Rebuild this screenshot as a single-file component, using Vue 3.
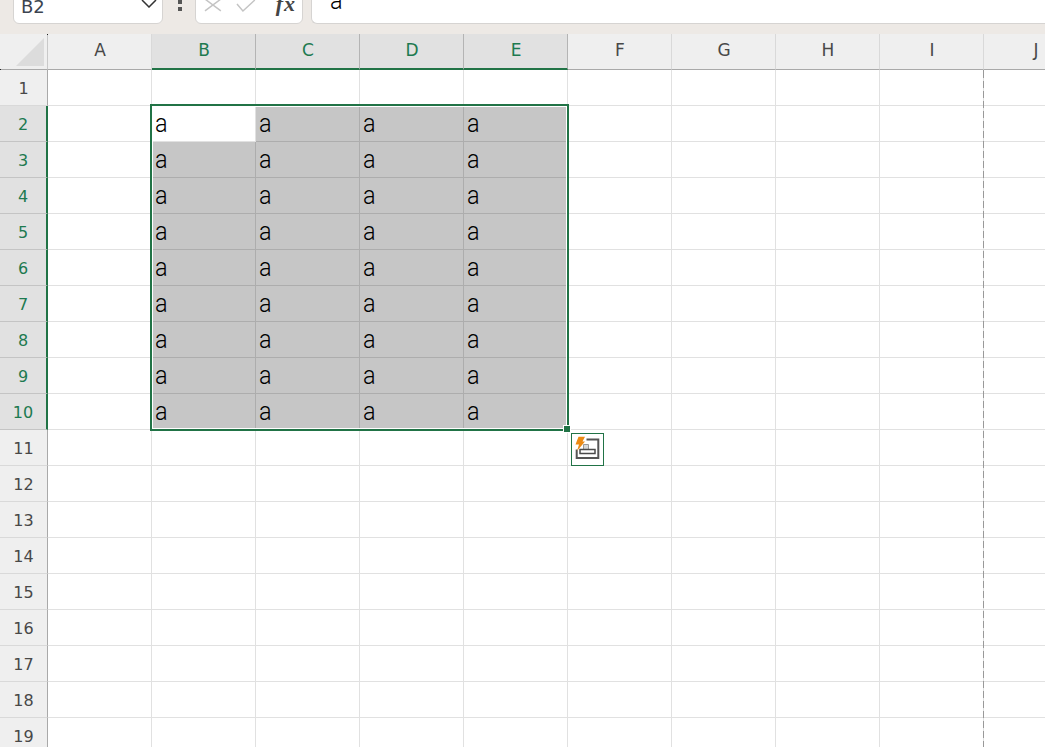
<script setup>
const cols = ['A','B','C','D','E','F','G','H','I','J']
const rows = Array.from({ length: 19 }, (_, i) => i + 1)
const selCol = c => c >= 1 && c <= 4
const selRow = r => r >= 2 && r <= 10
const cellClass = (r, c) => ({
  sel: selRow(r) && selCol(c) && !(r === 2 && c === 1)
})
</script>

<template>
  <div class="app">
    <div class="toolbar">
      <div class="namebox">
        <span class="name">B2</span>
        <svg class="chev" width="16" height="9" viewBox="0 0 16 9"><path d="M1 1 L8 8 L15 1" fill="none" stroke="#333" stroke-width="1.5"/></svg>
      </div>
      <div class="dots"><i></i><i></i></div>
      <div class="fxbox">
        <svg width="18" height="13" viewBox="0 0 18 13"><path d="M1 0 L17 12 M17 0 L1 12" stroke="#c4c4c4" stroke-width="1.5" fill="none"/></svg>
        <svg width="20" height="12" viewBox="0 0 20 12"><path d="M1 4 L7 11 L19 0" stroke="#c4c4c4" stroke-width="1.5" fill="none"/></svg>
        <span class="fx">fx</span>
      </div>
      <div class="formula"><span class="glyph-a">a</span></div>
    </div>

    <div class="sheet">
      <div class="corner"><i></i></div>
      <div v-for="(c, i) in cols" :key="c" class="colhead" :class="{ on: selCol(i) }">{{ c }}</div>
      <template v-for="r in rows" :key="r">
        <div class="rowhead" :class="{ on: selRow(r) }">{{ r }}</div>
        <div v-for="(c, i) in cols" :key="c" class="cell" :class="cellClass(r, i)">
          <span v-if="selRow(r) && selCol(i)" class="glyph-a">a</span>
        </div>
      </template>

      <div class="pagebreak"></div>
      <i class="speck speck-top"></i>
      <i class="speck speck-left"></i>
      <div class="selection"><i class="handle"></i></div>
      <div class="smarttag">
        <svg width="31" height="31" viewBox="0 0 31 31">
          <path d="M14.5 5.5 H26.3 V24 H4.7 V15.5" fill="none" stroke="#555" stroke-width="2"/>
          <path d="M11.5 15.5 V10.5 H16.5 V15.5" fill="#d8d8d8" stroke="#999" stroke-width="1"/>
          <rect x="8" y="15.5" width="15" height="4" fill="#fff" stroke="#4a4a4a" stroke-width="1.5"/>
          <path d="M6.5 2.7 H13 L10.5 7.5 H13 L5 17 L7 10.5 H3.5 Z" fill="#ec8a14"/>
        </svg>
      </div>
    </div>
  </div>
</template>

<style>
html, body { margin: 0; overflow: hidden; background: #fff; }
</style>

<style scoped>
.app {
  width: 1045px;
  height: 747px;
  overflow: hidden;
  font-family: "DejaVu Sans", sans-serif;
}
.toolbar {
  height: 34px;
  background: #ede9e5;
  display: flex;
  align-items: flex-end;
  padding: 0 0 10px 13px;
  box-sizing: border-box;
  overflow: hidden;
}
.namebox, .fxbox, .formula {
  height: 30px;
  flex: none;
  background: #fff;
  border: 1px solid #d6d4d2;
  border-radius: 6px;
  box-sizing: border-box;
  display: flex;
  align-items: flex-end;
}
.namebox {
  width: 150px;
  justify-content: space-between;
  padding: 0 5px 14px 7px;
}
.name { font-size: 18px; line-height: 18px; color: #3c4450; position: relative; top: 7px; }
.chev { margin-bottom: 1px; }
.dots { width: 32px; flex: none; display: flex; flex-direction: column; align-items: center; gap: 3px; padding-bottom: 13px; padding-left: 1px; box-sizing: border-box; }
.dots i { width: 4px; height: 4px; background: #555; display: block; }
.fxbox {
  width: 108px;
  padding: 0 6px 11px 9px;
  gap: 15px;
  align-items: flex-end;
}
.fxbox svg:first-child { margin-left: -1px; }
.fxbox svg:nth-child(2) { margin-left: -1px; }
.fx {
  font-family: "Liberation Serif", serif;
  font-style: italic;
  font-weight: 700;
  font-size: 22px;
  letter-spacing: 1px;
  line-height: 18px;
  color: #444;
  margin-left: 5px;
  position: relative;
  top: 1px;
}
.formula {
  width: 740px;
  margin-left: 8px;
  padding: 0 0 16px 18px;
  line-height: 14px;
  border-right: none;
  border-radius: 6px 0 0 6px;
}
.glyph-a {
  display: inline-block;
  font-family: Roboto, sans-serif;
  font-weight: 300;
  font-size: 26px;
  line-height: 28px;
  transform: scaleX(.9);
  transform-origin: left center;
  color: #000;
}
.formula .glyph-a {
  line-height: 14px;
}
.sheet {
  position: relative;
  display: grid;
  grid-template-columns: 48px repeat(10, 104px);
  grid-template-rows: 36px repeat(19, 36px);
  background: #fff;
}
.corner {
  background: #efefef;
  border-right: 1px solid #c8c8c8;
  border-bottom: 1px solid #a9a9a9;
  box-sizing: border-box;
  position: relative;
}
.corner i {
  position: absolute;
  left: 16px;
  top: 4px;
  width: 28px;
  height: 28px;
  background: #dcdcdc;
  clip-path: polygon(100% 0, 100% 100%, 0 100%);
}
.colhead {
  background: #efefef;
  border-right: 1px solid #d9d9d9;
  border-bottom: 1px solid #a9a9a9;
  box-sizing: border-box;
  display: flex;
  align-items: center;
  justify-content: center;
  font-size: 17px;
  color: #484848;
  padding: 0 0 3px 1px;
}
.colhead.on {
  background: #e1e1e1;
  color: #1d7a50;
  border-right-color: #b4b4b4;
  border-bottom: 2px solid #217346;
}
.rowhead {
  background: #efefef;
  border-right: 1px solid #a9a9a9;
  border-bottom: 1px solid #d9d9d9;
  box-sizing: border-box;
  display: flex;
  align-items: center;
  justify-content: center;
  padding-top: 2px;
  font-size: 16px;
  color: #484848;
}
.rowhead.on {
  background: #e1e1e1;
  color: #1d7a50;
  border-right: 2px solid #217346;
  border-bottom-color: #c4c4c4;
}
.cell {
  border-right: 1px solid #e1e1e1;
  border-bottom: 1px solid #e1e1e1;
  box-sizing: border-box;
  display: flex;
  align-items: center;
  padding: 0 0 2px 3px;
}
.cell.sel {
  background: #c6c6c6;
  border-right-color: #adadad;
  border-bottom-color: #adadad;
}
.pagebreak {
  position: absolute;
  left: 983px;
  top: 36px;
  bottom: 0;
  width: 1px;
  background: repeating-linear-gradient(#999 0 7px, transparent 7px 10px);
  background-position: 0 1px;
}
.speck {
  position: absolute;
  width: 1px;
  height: 1px;
  background: #222;
}
.speck-top { left: 47px; top: 0; }
.speck-left { left: 0; top: 35px; }
.selection {
  position: absolute;
  left: 150px;
  top: 70px;
  width: 419px;
  height: 327px;
  border: 2px solid #217346;
  box-shadow: inset 0 0 0 1px #fff;
  box-sizing: border-box;
  pointer-events: none;
}
.handle {
  position: absolute;
  right: -3px;
  bottom: -3px;
  width: 6px;
  height: 6px;
  background: #217346;
  outline: 1px solid #fff;
}
.smarttag {
  position: absolute;
  left: 571px;
  top: 399px;
  width: 33px;
  height: 33px;
  box-sizing: border-box;
  background: #fff;
  border: 1px solid #217346;
}
</style>
